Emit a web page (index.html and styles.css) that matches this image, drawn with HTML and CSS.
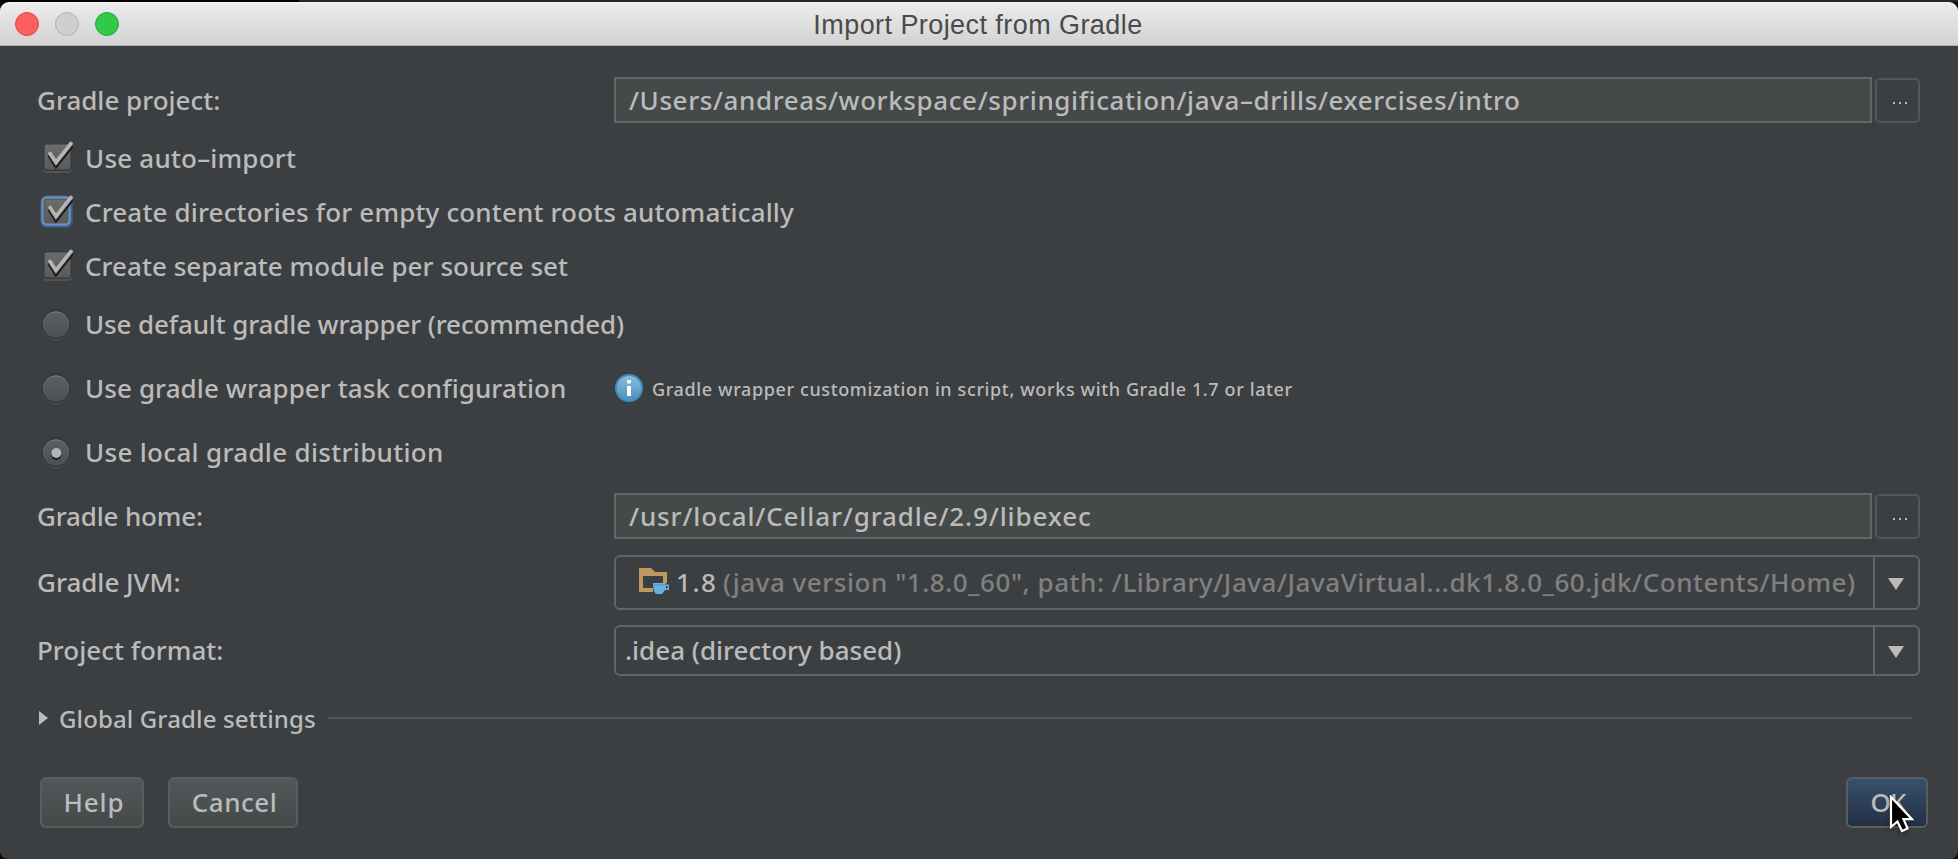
FILE: index.html
```html
<!DOCTYPE html>
<html lang="en">
<head>
<meta charset="utf-8">
<title>Import Project from Gradle</title>
<link rel="stylesheet" href="styles.css">
</head>
<body>
<svg class="defs" width="0" height="0" aria-hidden="true">
  <defs>
    <linearGradient id="box" x1="0" y1="0" x2="0" y2="1"><stop offset="0" stop-color="#6c6c6c"/><stop offset="1" stop-color="#5a5a5a"/></linearGradient>
    <linearGradient id="ball" x1="0" y1="0" x2="0" y2="1"><stop offset="0" stop-color="#5c6164"/><stop offset="1" stop-color="#4a4f52"/></linearGradient>
    <linearGradient id="info" x1="0" y1="0" x2="0" y2="1"><stop offset="0" stop-color="#8fc0dc"/><stop offset="1" stop-color="#4590bd"/></linearGradient>
    <symbol id="tick" viewBox="0 0 36 40">
      <path d="M12 17.5 L18 27 L33 8" fill="none" stroke="#1f1f1f" stroke-width="4" stroke-linecap="round" stroke-linejoin="miter"/>
      <path d="M12 14.5 L18 23.500 L33 4.500" fill="none" stroke="#b4b4b4" stroke-width="3.800" stroke-linecap="round" stroke-linejoin="miter"/>
    </symbol>
    <symbol id="check" viewBox="0 0 36 40">
      <rect x="5" y="6" width="29" height="28" rx="4" fill="#505355"/>
      <rect x="5" y="4" width="29" height="28" rx="4" fill="#393939"/>
      <rect x="6.500" y="5.500" width="26" height="25" rx="2.500" fill="url(#box)"/>
      <use href="#tick"/>
    </symbol>
    <symbol id="check-focus" viewBox="0 0 36 40">
      <rect x="2" y="2" width="33" height="33" rx="7" fill="#41536a"/>
      <rect x="3.500" y="3.500" width="30" height="30" rx="5.500" fill="#466d9b"/>
      <rect x="4.500" y="4.500" width="27" height="27" rx="4" fill="#5c5c5c" stroke="#6695c8" stroke-width="2"/>
      <rect x="7" y="7" width="22" height="22" rx="2" fill="url(#box)"/>
      <use href="#tick"/>
    </symbol>
    <symbol id="radio" viewBox="0 0 32 34">
      <circle cx="16" cy="18.500" r="14" fill="#4a4c4e"/>
      <circle cx="16" cy="16.500" r="14.500" fill="#333638"/>
      <circle cx="16" cy="16.300" r="13" fill="#73787b"/>
      <circle cx="16" cy="17" r="12.700" fill="url(#ball)"/>
    </symbol>
    <symbol id="down" viewBox="0 0 16 12"><path d="M0 0H16L8 12Z" fill="#bbb"/></symbol>
    <symbol id="dots" viewBox="0 0 14 2"><path d="M0 0h2v2H0zM6 0h2v2H6zM12 0h2v2h-2z" fill="#bbb"/></symbol>
  </defs>
</svg>
<div class="desktop">
  <div class="window">
    <header class="titlebar">
      <div class="lights">
        <i class="light close"></i><i class="light minimize"></i><i class="light maximize"></i>
      </div>
      <h1 class="title">Import Project from Gradle</h1>
    </header>
    <main class="content">
      <div class="row field-row">
        <label class="label">Gradle project:</label>
        <div class="input path-long">/Users/andreas/workspace/springification/java–drills/exercises/intro</div>
        <button class="browse"><svg width="14" height="2"><use href="#dots"/></svg></button>
      </div>
      <div class="checks">
        <label class="option"><svg class="mark" width="36" height="40"><use href="#check"/></svg><span class="sp-auto">Use auto–import</span></label>
        <label class="option"><svg class="mark" width="36" height="40"><use href="#check-focus"/></svg><span class="sp-dirs">Create directories for empty content roots automatically</span></label>
        <label class="option"><svg class="mark" width="36" height="40"><use href="#check"/></svg><span class="sp-module">Create separate module per source set</span></label>
      </div>
      <div class="radios">
        <label class="option"><svg class="ball" width="32" height="34"><use href="#radio"/></svg><span class="sp-default">Use default gradle wrapper (recommended)</span></label>
        <div class="row">
          <label class="option task"><svg class="ball" width="32" height="34"><use href="#radio"/></svg><span class="sp-task">Use gradle wrapper task configuration</span></label>
          <svg class="info-icon" width="28" height="28" viewBox="0 0 28 28">
            <circle cx="14" cy="14" r="13" fill="url(#info)" stroke="#3f8fc1" stroke-width="2"/>
            <rect x="12" y="6" width="4" height="3.500" rx="1" fill="#fff"/><rect x="12" y="12" width="4" height="10" fill="#fff"/>
          </svg>
          <span class="hint">Gradle wrapper customization in script, works with Gradle 1.7 or later</span>
        </div>
        <label class="option"><svg class="ball" width="32" height="34"><use href="#radio"/><circle cx="16.300" cy="19" r="5" fill="#1c1e1f"/><circle cx="16.300" cy="17" r="5" fill="#b4b4b4"/></svg><span class="sp-local">Use local gradle distribution</span></label>
      </div>
      <div class="row field-row home">
        <label class="label sp-home">Gradle home:</label>
        <div class="input path-short">/usr/local/Cellar/gradle/2.9/libexec</div>
        <button class="browse"><svg width="14" height="2"><use href="#dots"/></svg></button>
      </div>
      <div class="row jvm">
        <label class="label">Gradle JVM:</label>
        <div class="combo">
          <div class="value jvm-value">
            <svg class="folder" width="31" height="27" viewBox="0 0 31 27">
              <path fill-rule="evenodd" d="M0 0H12L16 4H28V15H24V8H4V20H14V24H0Z" fill="#be9860"/>
              <path d="M14 15H27V16.500H30V22H26L23 26H17Q14 23 14 15ZM27 18V20.500H28.500V18Z" fill="#6ab0dd" fill-rule="evenodd"/>
              <path d="M14 17H27" stroke="#4a93c0" stroke-width="1"/>
            </svg>
            <span class="version">1.8</span><span class="detail">(java version "1.8.0_60", path: /Library/Java/JavaVirtual...dk1.8.0_60.jdk/Contents/Home)</span>
          </div>
          <div class="arrow"><svg width="16" height="12"><use href="#down"/></svg></div>
        </div>
      </div>
      <div class="row format">
        <label class="label">Project format:</label>
        <div class="combo">
          <div class="value">.idea (directory based)</div>
          <div class="arrow"><svg width="16" height="12"><use href="#down"/></svg></div>
        </div>
      </div>
      <div class="row global">
        <svg width="9" height="14" viewBox="0 0 9 14"><path d="M0 0L9 7L0 14Z" fill="#bbb"/></svg>
        <span class="global-label">Global Gradle settings</span>
        <div class="rule"></div>
      </div>
      <footer class="actions">
        <button class="btn help">Help</button>
        <button class="btn cancel">Cancel</button>
        <button class="btn ok">OK
          <svg class="cursor" width="26" height="42" viewBox="0 0 26 42"><path d="M2 2V32L8.500 26.500L13 36L18.500 33.500L14.500 24.200H23Z" fill="#000" stroke="#fff" stroke-width="2.200"/></svg>
        </button>
      </footer>
    </main>
  </div>
</div>
</body>
</html>
```
FILE: styles.css
```css
* { box-sizing: border-box; }
body {
  margin: 0;
  color: #bbb;
  font: 500 26px/36px "Noto Sans", sans-serif;
}
.defs { display: block; position: absolute; }
svg { display: block; flex: none; }
.desktop {
  height: 859px;
  padding-top: 2px;
  background: linear-gradient(90deg, #000 299px, #262426 299px) 0 0 / 100% 2px no-repeat, #0a0a0a;
}
.window {
  height: 857px;
  border-radius: 9px 9px 8px 8px;
  background: #3c3f41;
  overflow: hidden;
}
.titlebar {
  display: grid;
  grid-template-columns: 1fr auto 1fr;
  align-items: center;
  height: 44px;
  padding-left: 15px;
  background: linear-gradient(#ececec, #d2d2d2);
  border-top: 1px solid #f6f6f6;
  border-bottom: 1px solid #b0b0b0;
}
.lights { display: flex; gap: 16px; }
.light { width: 24px; height: 24px; border-radius: 50%; border: 1px solid; }
.close { background: #fc605c; border-color: #e14942; }
.minimize { background: #cfcfcf; border-color: #b2b2b2; }
.maximize { background: #34c84a; border-color: #25a936; }
.title {
  grid-column: 2;
  margin: 0 17px 0 0;
  padding-top: 2px;
  color: #4a4a4a;
  font: 400 27px/40px "Liberation Sans", Arial, sans-serif;
  letter-spacing: 0.43px;
  white-space: nowrap;
}
.content { padding: 31px 38px 0 37px; }
.row { display: flex; align-items: center; }
.label { flex: none; width: 577px; white-space: nowrap; }
.field-row { height: 46px; }
.input {
  flex: 1;
  height: 46px;
  padding: 2px 0 0 13px;
  line-height: 38px;
  border: 2px solid #646464;
  background: #45494a;
  white-space: nowrap;
}
.path-long { letter-spacing: 0.596px; }
.path-short { letter-spacing: 0.876px; }
.browse {
  display: flex;
  justify-content: center;
  align-items: center;
  width: 45px;
  height: 45px;
  margin: 1px 0 0 3px;
  padding: 4px 0 0 5px;
  border: 2px solid #555654;
  border-radius: 5px;
  background: none;
}
.checks { padding-top: 8px; }
.option { display: flex; align-items: center; height: 54px; white-space: nowrap; }
.mark { margin: 2px 11px 0 1px; }
.ball { margin: 2px 13px 0 3px; }
.radios .option { height: 64px; }
.radios { margin-top: -1px; }
.task { width: 578px; }
.info-icon { margin-right: 9px; }
.hint { font-size: 18px; letter-spacing: 0.618px; padding-top: 2px; white-space: nowrap; }
.sp-auto { letter-spacing: 0.2px; }
.sp-dirs { letter-spacing: 0.153px; }
.sp-module { letter-spacing: 0.036px; }
.sp-default { letter-spacing: -0.131px; }
.sp-task { letter-spacing: 0.092px; }
.sp-local { letter-spacing: 0.316px; }
.sp-home { letter-spacing: -0.165px; }
.home { margin-top: 9px; }
.jvm { height: 55px; margin-top: 16px; }
.jvm .label, .format .label { padding-bottom: 1px; }
.format { height: 51px; margin-top: 15px; }
.combo {
  display: flex;
  flex: 1;
  align-self: stretch;
  border: 2px solid #646464;
  border-radius: 6px;
}
.value { display: flex; align-items: center; flex: 1; padding: 0 0 2px 9px; white-space: nowrap; }
.jvm-value { padding-left: 23px; }
.version { width: 47px; margin-left: 6px; letter-spacing: 1.528px; }
.detail { color: #808080; letter-spacing: 0.538px; }
.arrow {
  display: flex;
  justify-content: center;
  align-items: center;
  width: 45px;
  padding: 3px 2px 0 0;
  border-left: 2px solid #646464;
}
.global { height: 54px; margin-top: 15px; padding: 0 8px 0 2px; }
.global-label { width: 280px; padding: 2px 0 0 11px; font-size: 24px; letter-spacing: 0.125px; white-space: nowrap; }
.rule { flex: 1; height: 2px; background: #555; }
.actions { display: flex; gap: 24px; margin: 32px -8px 0 3px; }
.btn {
  height: 51px;
  padding: 0 0 2px;
  color: #bbb;
  font: 500 26px/36px "Noto Sans", sans-serif;
  border: 2px solid #5a5d5d;
  border-radius: 6px;
  background: linear-gradient(#53585a, #434849);
}
.help { width: 104px; letter-spacing: 0.869px; padding-left: 4px; }
.cancel { width: 130px; letter-spacing: 0.525px; padding-left: 3px; }
.ok {
  position: relative;
  width: 82px;
  margin-left: auto;
  padding-left: 2px;
  letter-spacing: -0.8px;
  background: linear-gradient(#384f6d, #233143);
}
.cursor { position: absolute; left: 41px; top: 16px; filter: drop-shadow(0 2px 2px rgba(0, 0, 0, 0.4)); }
```
